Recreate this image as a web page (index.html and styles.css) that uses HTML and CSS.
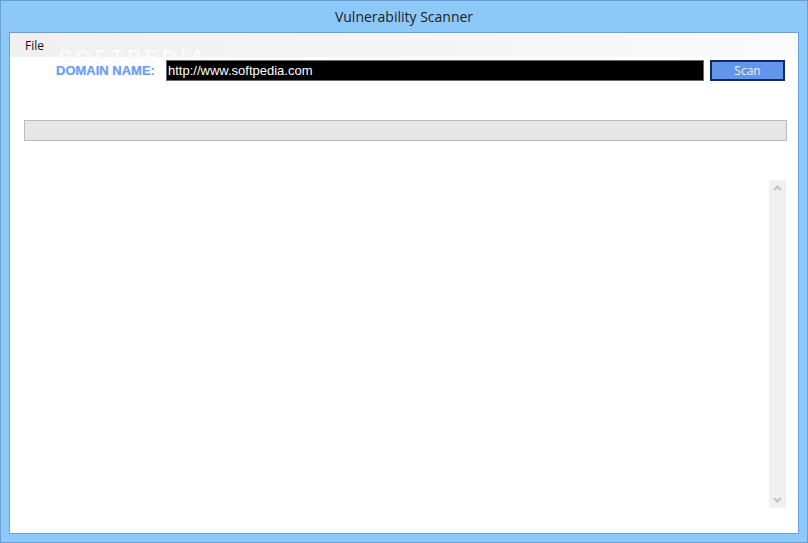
FILE: index.html
```html
<!DOCTYPE html>
<html>
<head>
<meta charset="utf-8">
<title>Vulnerability Scanner</title>
<link rel="stylesheet" href="styles.css">
</head>
<body>
<div class="window">
  <div class="titlebar">Vulnerability Scanner</div>
  <div class="client">
    <div class="menubar"><span class="menu-item">File</span></div>
    <div class="watermark">SOFTPEDIA<sup>®</sup></div>
    <div class="form-row">
      <div class="label">DOMAIN NAME:</div>
      <div class="textbox">http://www.softpedia.com</div>
      <div class="button">Scan</div>
    </div>
    <div class="progress"></div>
    <div class="list">
      <div class="scrollbar">
        <svg class="arrow" width="17" height="17" viewBox="0 0 17 17"><path d="M5 10 L8.5 6.5 L12 10" fill="none" stroke="#c2c2c2" stroke-width="2"/></svg>
        <svg class="arrow" width="17" height="17" viewBox="0 0 17 17"><path d="M5 7 L8.5 10.5 L12 7" fill="none" stroke="#c2c2c2" stroke-width="2"/></svg>
      </div>
    </div>
  </div>
</div>
</body>
</html>
```
FILE: styles.css
```css
html, body {
  margin: 0;
  padding: 0;
}
body {
  width: 808px;
  height: 543px;
  overflow: hidden;
}
.window {
  box-sizing: border-box;
  width: 808px;
  height: 543px;
  border: 1px solid #6b9dd0;
  background: #8cc8f8;
  padding: 0 8px 8px 8px;
  display: flex;
  flex-direction: column;
}
.titlebar {
  height: 31px;
  display: flex;
  align-items: center;
  justify-content: center;
  font-family: "Open Sans", "DejaVu Sans", sans-serif;
  font-size: 14px;
  color: #1e1e1e;
  padding-bottom: 1px;
  box-sizing: border-box;
}
.client {
  flex: 1;
  border: 1px solid #6f9fd2;
  background: #ffffff;
  display: flex;
  flex-direction: column;
  position: relative;
}
.menubar {
  height: 24px;
  background: linear-gradient(to right, #f0f0f0 0%, #f4f4f4 50%, #fafafa 100%);
  display: flex;
  align-items: center;
  font-family: "Open Sans", "DejaVu Sans", sans-serif;
  font-size: 12px;
  color: #111;
}
.menu-item {
  padding-left: 15px;
}
.watermark {
  position: absolute;
  z-index: 0;
  left: 48px;
  top: 15px;
  height: 12px;
  line-height: 12px;
  font-family: "Liberation Sans", Arial, sans-serif;
  font-weight: bold;
  font-size: 20px;
  letter-spacing: 4px;
  color: rgba(255,255,255,0.92);
  text-shadow: 0 0 1px rgba(200,200,200,0.4);
  pointer-events: none;
}
.watermark sup {
  font-size: 8px;
  letter-spacing: 0;
}
.form-row {
  position: relative;
  z-index: 1;
  display: flex;
  align-items: center;
  margin-top: 3px;
  padding-left: 46px;
  height: 21px;
}
.label {
  width: 110px;
  font-family: "Liberation Sans", Arial, sans-serif;
  font-weight: bold;
  font-size: 13px;
  line-height: 15px;
  color: #6e9ef0;
  text-shadow: 0 0 1px rgba(108,156,240,0.5);
}
.textbox {
  box-sizing: border-box;
  width: 538px;
  height: 21px;
  background: #000;
  border: 1px solid #6a6a6a;
  color: #fff;
  font-family: "Liberation Sans", Arial, sans-serif;
  font-size: 13px;
  line-height: 19px;
  padding-left: 1px;
}
.button {
  box-sizing: border-box;
  width: 75px;
  height: 21px;
  margin-left: 6px;
  background: #6495ed;
  border: 2px solid #0c2c68;
  color: #eef2ff;
  font-family: "Open Sans", "DejaVu Sans", sans-serif;
  font-size: 12px;
  line-height: 17px;
  text-align: center;
}
.progress {
  box-sizing: border-box;
  margin-top: 39px;
  margin-left: 14px;
  width: 763px;
  height: 21px;
  background: #e6e6e6;
  border: 1px solid #bcbcbc;
}
.list {
  margin-top: 39px;
  display: flex;
  justify-content: flex-end;
  padding-right: 12px;
}
.scrollbar {
  width: 17px;
  height: 328px;
  background: #f0f0f0;
  display: flex;
  flex-direction: column;
  justify-content: space-between;
}
.arrow {
  display: block;
}
```
